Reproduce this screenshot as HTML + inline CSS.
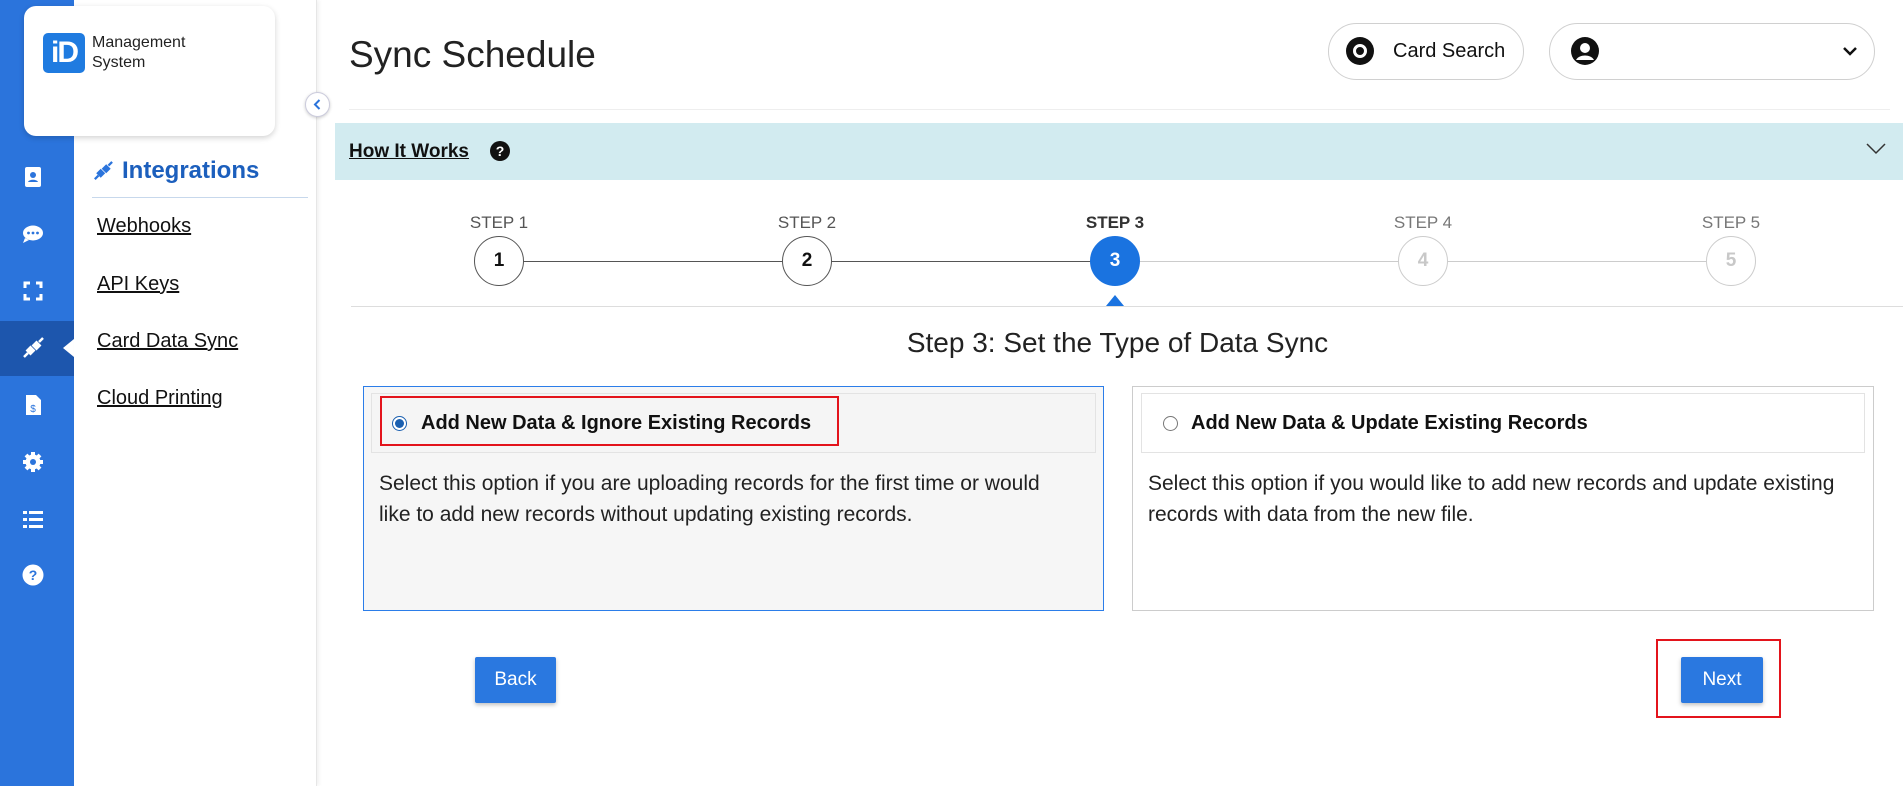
<!DOCTYPE html>
<html><head><meta charset="utf-8"><style>
*{box-sizing:border-box;margin:0;padding:0}
body{width:1903px;height:786px;position:relative;overflow:hidden;background:#fff;font-family:"Liberation Sans",sans-serif;color:#111}
.a{position:absolute}
.side{left:0;top:0;width:74px;height:786px;background:#2b74dc}
.ico{position:absolute;left:22px;width:22px;height:22px}
.panel{left:74px;top:0;width:243px;height:786px;background:#fff;border-right:1px solid #e6e6e6;box-shadow:2px 0 4px rgba(0,0,0,.06)}
.lnk{position:absolute;left:97px;font-size:20px;text-decoration:underline;color:#111;line-height:24px}
.step{position:absolute;width:50px;height:50px;border-radius:50%;border:1px solid #555;background:#fff;text-align:center;line-height:48px;font-weight:bold;font-size:19px;color:#111}
.slab{position:absolute;font-size:17px;color:#555;width:100px;text-align:center;line-height:20px}
.desc{font-size:21px;line-height:31px;color:#222;white-space:nowrap}
.btn{position:absolute;background:#2a78e0;color:#fff;font-size:19px;text-align:center;line-height:46px;height:46px;border-radius:2px;box-shadow:0 2px 4px rgba(0,0,0,.25)}
</style></head><body>
<div class="a side"></div>
<div class="a" style="left:0;top:321px;width:74px;height:55px;background:#1d56ad"></div>
<div class="a" style="left:63px;top:339px;width:0;height:0;border-top:9px solid transparent;border-bottom:9px solid transparent;border-right:11px solid #fff"></div>
<svg class="ico" style="top:166px" viewBox="0 0 22 22"><rect x="3" y="1" width="16" height="20" rx="2" fill="#fff"/><circle cx="11" cy="9" r="3" fill="#2b74dc"/><path d="M6 16c1-3 9-3 10 0z" fill="#2b74dc"/></svg>
<svg class="ico" style="top:223px" viewBox="0 0 22 22"><ellipse cx="11" cy="10" rx="10" ry="7.5" fill="#fff"/><path d="M3 15l-2 5 6-3z" fill="#fff"/><circle cx="6.5" cy="10" r="1.4" fill="#2b74dc"/><circle cx="11" cy="10" r="1.4" fill="#2b74dc"/><circle cx="15.5" cy="10" r="1.4" fill="#2b74dc"/></svg>
<svg class="ico" style="top:280px" viewBox="0 0 22 22" fill="none" stroke="#fff" stroke-width="3"><path d="M3 8V3h5M14 3h5v5M19 14v5h-5M8 19H3v-5"/></svg>
<svg class="ico" style="top:337px" viewBox="0 0 22 22" fill="#fff"><path d="M2 20l4-4" stroke="#fff" stroke-width="2.5"/><rect x="5" y="10" width="7" height="7" transform="rotate(-45 8.5 13.5)"/><rect x="11" y="5" width="7" height="7" transform="rotate(-45 14.5 8.5)"/><path d="M17 5l4-4" stroke="#fff" stroke-width="2.5"/></svg>
<svg class="ico" style="top:394px" viewBox="0 0 22 22"><path d="M4 1h10l5 5v15H4z" fill="#fff"/><text x="11" y="18" font-size="10" text-anchor="middle" fill="#2b74dc" font-family="Liberation Sans">$</text></svg>
<svg class="ico" style="top:451px" viewBox="0 0 22 22"><circle cx="11" cy="11" r="7.5" fill="#fff"/><g stroke="#fff" stroke-width="4"><path d="M11 1v20M1 11h20M4 4l14 14M18 4L4 18"/></g><circle cx="11" cy="11" r="3" fill="#2b74dc"/></svg>
<svg class="ico" style="top:508px" viewBox="0 0 22 22" fill="#fff"><rect x="1" y="3" width="4" height="3"/><rect x="7" y="3" width="14" height="3"/><rect x="1" y="10" width="4" height="3"/><rect x="7" y="10" width="14" height="3"/><rect x="1" y="17" width="4" height="3"/><rect x="7" y="17" width="14" height="3"/></svg>
<svg class="ico" style="top:564px" viewBox="0 0 22 22"><circle cx="11" cy="11" r="10.5" fill="#fff"/><text x="11" y="16" font-size="14" font-weight="bold" text-anchor="middle" fill="#2b74dc" font-family="Liberation Sans">?</text></svg>

<div class="a panel"></div>
<div class="a" style="left:24px;top:6px;width:251px;height:130px;background:#fff;border-radius:12px;box-shadow:0 2px 6px rgba(0,0,0,.18)"></div>
<div class="a" style="left:43px;top:33px;width:42px;height:40px;background:#1f7be0;border-radius:5px;color:#fff;font-weight:bold;font-size:30px;line-height:40px;text-align:center;letter-spacing:-2px">iD</div>
<div class="a" style="left:92px;top:33px;font-size:16px;line-height:20px;color:#222">Management<br>System</div>
<div class="a" style="left:305px;top:92px;width:25px;height:25px;border-radius:50%;background:#fff;border:1px solid #ccd;box-shadow:0 1px 3px rgba(0,0,0,.2)"></div>
<svg class="a" style="left:311px;top:98px" width="13" height="13" viewBox="0 0 13 13"><path d="M8.5 2L4 6.5 8.5 11" fill="none" stroke="#2b74dc" stroke-width="2"/></svg>

<svg class="a" style="left:92px;top:161px" width="22" height="20" viewBox="0 0 22 22" fill="#2b74dc"><path d="M2 20l4-4" stroke="#2b74dc" stroke-width="2.5"/><rect x="5" y="10" width="7" height="7" transform="rotate(-45 8.5 13.5)"/><rect x="11" y="5" width="7" height="7" transform="rotate(-45 14.5 8.5)"/><path d="M17 5l4-4" stroke="#2b74dc" stroke-width="2.5"/></svg>
<div class="a" style="left:122px;top:157px;font-size:24px;font-weight:bold;color:#1c5fbd">Integrations</div>
<div class="a" style="left:92px;top:197px;width:216px;height:1px;background:#c7d8ec"></div>
<div class="lnk" style="top:214px">Webhooks</div>
<div class="lnk" style="top:272px">API Keys</div>
<div class="lnk" style="top:329px">Card Data Sync</div>
<div class="lnk" style="top:386px">Cloud Printing</div>

<div class="a" style="left:349px;top:34px;font-size:37px;color:#222">Sync Schedule</div>
<div class="a" style="left:1328px;top:23px;width:196px;height:57px;border:1px solid #d0d0d0;border-radius:29px"></div>
<div class="a" style="left:1346px;top:37px;width:28px;height:28px;border-radius:50%;background:#111"></div>
<div class="a" style="left:1353px;top:44px;width:14px;height:14px;border-radius:50%;border:3px solid #fff"></div>
<div class="a" style="left:1393px;top:40px;font-size:20px;color:#111">Card Search</div>
<div class="a" style="left:1549px;top:23px;width:326px;height:57px;border:1px solid #d0d0d0;border-radius:29px"></div>
<svg class="a" style="left:1571px;top:37px" width="28" height="28" viewBox="0 0 28 28"><circle cx="14" cy="14" r="14" fill="#111"/><circle cx="14" cy="11" r="5" fill="#fff"/><path d="M5 23c3-6 15-6 18 0" fill="#fff"/></svg>
<svg class="a" style="left:1842px;top:45px" width="16" height="12" viewBox="0 0 16 12"><path d="M2 3l6 6 6-6" fill="none" stroke="#111" stroke-width="2.5"/></svg>
<div class="a" style="left:349px;top:109px;width:1541px;height:1px;background:#eee"></div>

<div class="a" style="left:335px;top:123px;width:1568px;height:57px;background:#d2ebf0"></div>
<div class="a" style="left:349px;top:141px;font-size:19px;font-weight:bold;text-decoration:underline;color:#111">How It Works</div>
<div class="a" style="left:490px;top:141px;width:20px;height:20px;border-radius:50%;background:#111;color:#fff;font-size:14px;font-weight:bold;text-align:center;line-height:20px">?</div>
<svg class="a" style="left:1866px;top:143px" width="20" height="12" viewBox="0 0 20 12"><path d="M1 1l9 9 9-9" fill="none" stroke="#333" stroke-width="1.5"/></svg>

<div class="a" style="left:499px;top:261px;width:616px;height:1px;background:#555"></div>
<div class="a" style="left:1115px;top:261px;width:616px;height:1px;background:#ccc"></div>
<div class="slab" style="left:449px;top:213px">STEP 1</div>
<div class="slab" style="left:757px;top:213px">STEP 2</div>
<div class="slab" style="left:1065px;top:213px;font-weight:bold;color:#333">STEP 3</div>
<div class="slab" style="left:1373px;top:213px;color:#777">STEP 4</div>
<div class="slab" style="left:1681px;top:213px;color:#777">STEP 5</div>
<div class="step" style="left:474px;top:236px">1</div>
<div class="step" style="left:782px;top:236px">2</div>
<div class="step" style="left:1090px;top:236px;background:#1a73e0;border-color:#1a73e0;color:#fff">3</div>
<div class="step" style="left:1398px;top:236px;border-color:#ccc;color:#c8c8c8">4</div>
<div class="step" style="left:1706px;top:236px;border-color:#ccc;color:#c8c8c8">5</div>
<div class="a" style="left:1106px;top:295px;width:0;height:0;border-left:9px solid transparent;border-right:9px solid transparent;border-bottom:11px solid #1a73e0"></div>
<div class="a" style="left:351px;top:306px;width:1552px;height:1px;background:#ddd"></div>

<div class="a" style="left:351px;top:327px;width:1533px;text-align:center;font-size:28px;color:#222">Step 3: Set the Type of Data Sync</div>

<div class="a" style="left:363px;top:386px;width:741px;height:225px;border:1px solid #2b7de9;background:#f6f6f6"></div>
<div class="a" style="left:371px;top:393px;width:725px;height:60px;border:1px solid #e3e3e3;background:#f5f5f5"></div>
<div class="a" style="left:380px;top:396px;width:459px;height:50px;border:2px solid #e3141c"></div>
<div class="a" style="left:392px;top:416px;width:15px;height:15px;border-radius:50%;border:1px solid #1a5fb0;background:#fff"></div>
<div class="a" style="left:395px;top:419px;width:9px;height:9px;border-radius:50%;background:#1a5fb0"></div>
<div class="a" style="left:421px;top:412px;font-size:20px;font-weight:bold;color:#111">Add New Data &amp; Ignore Existing Records</div>
<div class="a desc" style="left:379px;top:468px">Select this option if you are uploading records for the first time or would<br>like to add new records without updating existing records.</div>

<div class="a" style="left:1132px;top:386px;width:742px;height:225px;border:1px solid #ccc;background:#fff"></div>
<div class="a" style="left:1141px;top:393px;width:724px;height:60px;border:1px solid #e3e3e3"></div>
<div class="a" style="left:1163px;top:416px;width:15px;height:15px;border-radius:50%;border:1px solid #777;background:#fff"></div>
<div class="a" style="left:1191px;top:412px;font-size:20px;font-weight:bold;color:#111">Add New Data &amp; Update Existing Records</div>
<div class="a desc" style="left:1148px;top:468px">Select this option if you would like to add new records and update existing<br>records with data from the new file.</div>

<div class="btn" style="left:475px;top:657px;width:81px">Back</div>
<div class="a" style="left:1656px;top:639px;width:125px;height:79px;border:2px solid #e3141c"></div>
<div class="btn" style="left:1681px;top:657px;width:82px">Next</div>
</body></html>
